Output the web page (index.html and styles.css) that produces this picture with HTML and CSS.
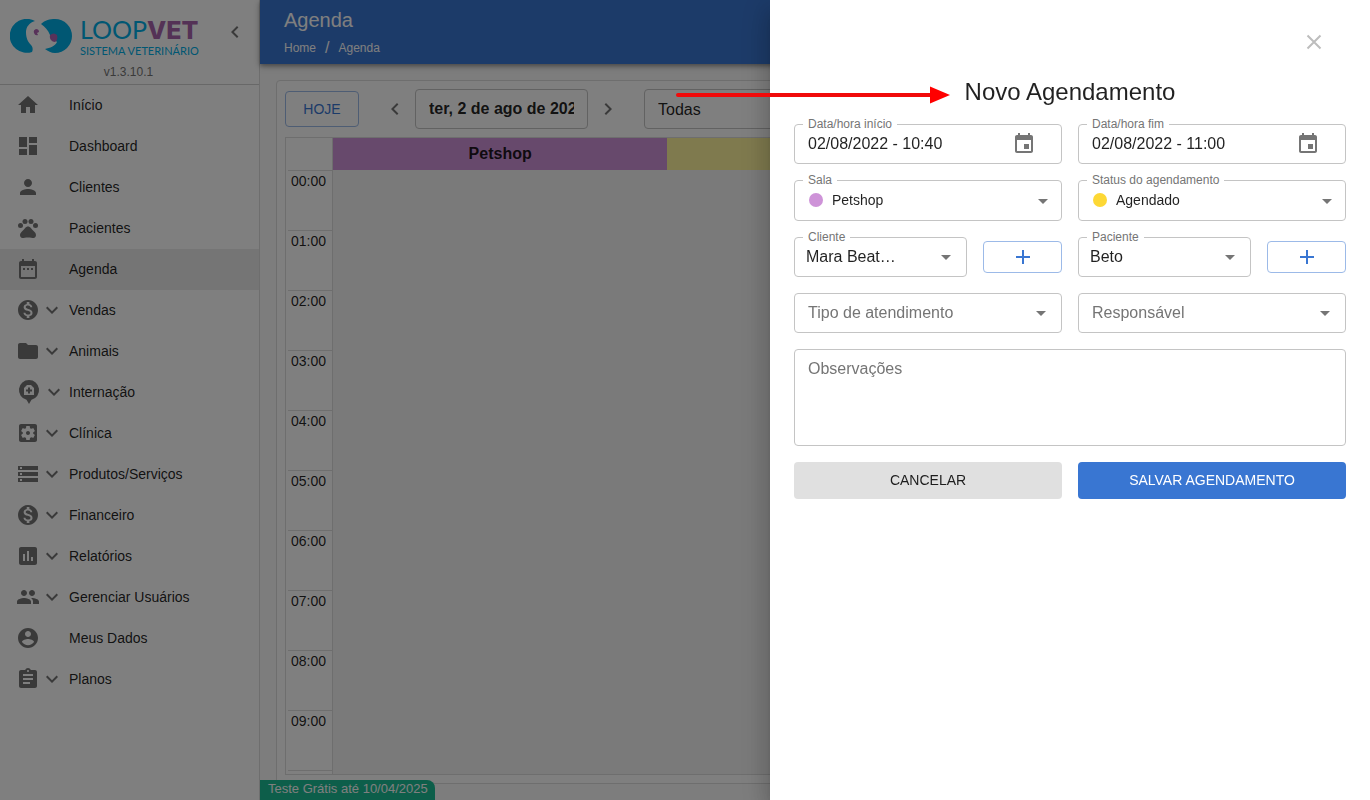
FILE: index.html
```html
<!DOCTYPE html>
<html lang="pt-BR">
<head>
<meta charset="utf-8">
<title>Agenda - LoopVet</title>
<link rel="stylesheet" href="styles.css">
</head>
<body>
<svg class="sprite" aria-hidden="true">
  <symbol id="down" viewBox="0 0 24 24"><path d="M7.41 8.59 12 13.17l4.59-4.58L18 10l-6 6-6-6z"/></symbol>
  <symbol id="left" viewBox="0 0 24 24"><path d="M15.41 7.41 14 6l-6 6 6 6 1.41-1.41L10.83 12z"/></symbol>
  <symbol id="right" viewBox="0 0 24 24"><path d="M10 6 8.59 7.41 13.17 12l-4.58 4.59L10 18l6-6z"/></symbol>
  <symbol id="caret" viewBox="0 0 24 24"><path d="m7 10 5 5 5-5z"/></symbol>
  <symbol id="plus" viewBox="0 0 24 24"><path d="M19 13h-6v6h-2v-6H5v-2h6V5h2v6h6z"/></symbol>
  <symbol id="event" viewBox="0 0 24 24"><path d="M17 12h-5v5h5v-5zM16 1v2H8V1H6v2H5c-1.11 0-1.99.9-1.99 2L3 19c0 1.1.89 2 2 2h14c1.1 0 2-.9 2-2V5c0-1.1-.9-2-2-2h-1V1h-2zm3 18H5V8h14v11z"/></symbol>
  <symbol id="money" viewBox="0 0 24 24"><path d="M12 2C6.48 2 2 6.48 2 12s4.48 10 10 10 10-4.48 10-10S17.52 2 12 2zm1.41 16.09V20h-2.67v-1.93c-1.71-.36-3.16-1.46-3.27-3.4h1.96c.1 1.05.82 1.87 2.65 1.87 1.96 0 2.4-.98 2.4-1.59 0-.83-.44-1.61-2.67-2.14-2.48-.6-4.18-1.62-4.18-3.67 0-1.72 1.39-2.84 3.11-3.21V4h2.67v1.95c1.86.45 2.79 1.86 2.85 3.39H14.3c-.05-1.11-.64-1.87-2.22-1.87-1.5 0-2.4.68-2.4 1.64 0 .84.65 1.39 2.67 1.91s4.18 1.39 4.18 3.91c-.01 1.83-1.38 2.83-3.12 3.16z"/></symbol>
</svg>

<div class="app">
  <aside class="sidebar">
    <header class="brand">
      <svg class="brand-mark" viewBox="0 0 62 34" aria-hidden="true">
        <path fill="#00aee6" d="M25 2C19 4 16 8 16 13C16 19 18 23 21 26C23 28 23 31 22 33A17 17 0 1 1 25 2Z"/>
        <path fill="#00aee6" d="M31 5C35 1 40 0 45 0A17 17 0 0 1 45 34C41 34 38 32 35 30C40 29 45 27 47 23L40 16C38 11 35 8 31 5Z"/>
        <path fill="#b064b4" d="M26 10a3 3 0 1 0 2 6l-1-2 2-1q0-3-3-3zM40 16q4-3 7 0c1 3 0 6-2 7c-3 0-6-3-5-7z"/>
      </svg>
      <div class="brand-text">
        <span class="brand-name">LOOP<b>VET</b></span>
        <span class="brand-sub">SISTEMA VETERINÁRIO</span>
      </div>
      <button class="icon-btn collapse" aria-label="Recolher menu"><svg class="icon"><use href="#left"/></svg></button>
      <span class="version">v1.3.10.1</span>
    </header>
    <nav class="menu">
      <a href="#"><svg class="icon" viewBox="0 0 24 24"><path d="M10 20v-6h4v6h5v-8h3L12 3 2 12h3v8z"/></svg><span>Início</span></a>
      <a href="#"><svg class="icon" viewBox="0 0 24 24"><path d="M3 13h8V3H3v10zm0 8h8v-6H3v6zm10 0h8V11h-8v10zm0-18v6h8V3h-8z"/></svg><span>Dashboard</span></a>
      <a href="#"><svg class="icon" viewBox="0 0 24 24"><path d="M12 12c2.21 0 4-1.79 4-4s-1.79-4-4-4-4 1.79-4 4 1.79 4 4 4zm0 2c-2.67 0-8 1.34-8 4v2h16v-2c0-2.66-5.33-4-8-4z"/></svg><span>Clientes</span></a>
      <a href="#"><svg class="icon" viewBox="0 0 24 24"><circle cx="4.5" cy="9.5" r="2.5"/><circle cx="9" cy="5.5" r="2.5"/><circle cx="15" cy="5.5" r="2.5"/><circle cx="19.5" cy="9.5" r="2.5"/><path d="M17.34 14.86c-.87-1.02-1.6-1.89-2.48-2.91-.46-.54-1.05-1.08-1.75-1.32-.11-.04-.22-.07-.33-.09-.25-.04-.52-.04-.78-.04s-.53 0-.79.05c-.11.02-.22.05-.33.09-.7.24-1.28.78-1.75 1.32-.87 1.02-1.6 1.89-2.48 2.91-1.31 1.31-2.92 2.76-2.62 4.79.29 1.02 1.02 2.03 2.33 2.32.73.15 3.06-.44 5.54-.44h.18c2.48 0 4.81.58 5.54.44 1.31-.29 2.04-1.31 2.33-2.32.31-2.04-1.3-3.49-2.61-4.8z"/></svg><span>Pacientes</span></a>
      <a href="#" class="active" aria-current="page"><svg class="icon" viewBox="0 0 24 24"><path d="M9 11H7v2h2v-2zm4 0h-2v2h2v-2zm4 0h-2v2h2v-2zm2-7h-1V2h-2v2H8V2H6v2H5c-1.11 0-1.99.9-1.99 2L3 20c0 1.1.89 2 2 2h14c1.1 0 2-.9 2-2V6c0-1.1-.9-2-2-2zm0 16H5V9h14v11z"/></svg><span>Agenda</span></a>
      <a href="#"><svg class="icon"><use href="#money"/></svg><svg class="icon"><use href="#down"/></svg><span>Vendas</span></a>
      <a href="#"><svg class="icon" viewBox="0 0 24 24"><path d="M10 4H4c-1.1 0-1.99.9-1.99 2L2 18c0 1.1.9 2 2 2h16c1.1 0 2-.9 2-2V8c0-1.1-.9-2-2-2h-8l-2-2z"/></svg><svg class="icon"><use href="#down"/></svg><span>Animais</span></a>
      <a href="#"><svg class="icon wide" viewBox="0 0 26 26"><path fill-rule="evenodd" d="M13 1a10 10 0 0 0-2.500 19.700L13 25l2.500-4.300A10 10 0 0 0 13 1zM8 9l3-3h4l3 3v7H8zM12 8.500v2h-2v2h2v2h2v-2h2v-2h-2v-2z"/></svg><svg class="icon"><use href="#down"/></svg><span>Internação</span></a>
      <a href="#"><svg class="icon" viewBox="0 0 24 24"><path d="M12 10c-1.1 0-2 .9-2 2s.9 2 2 2 2-.9 2-2-.9-2-2-2zm7-7H5c-1.11 0-2 .9-2 2v14c0 1.1.89 2 2 2h14c1.11 0 2-.9 2-2V5c0-1.1-.89-2-2-2zm-1.750 9c0 .23-.02.46-.05.68l1.48 1.16c.13.11.17.3.08.45l-1.4 2.420c-.09.15-.27.21-.43.15l-1.740-.7c-.36.28-.76.51-1.18.69l-.26 1.850c-.03.17-.18.3-.35.3h-2.800c-.17 0-.32-.13-.35-.29l-.26-1.850c-.43-.18-.82-.41-1.180-.69l-1.740.7c-.16.06-.34 0-.43-.15l-1.400-2.420c-.09-.15-.05-.34.08-.45l1.480-1.160c-.03-.23-.05-.46-.05-.69s.02-.46.05-.68l-1.480-1.160c-.13-.11-.17-.3-.08-.45l1.400-2.420c.09-.15.27-.21.43-.15l1.740.7c.36-.28.76-.51 1.180-.69l.26-1.850c.03-.17.18-.3.35-.3h2.800c.17 0 .32.13.35.29l.26 1.850c.43.18.82.41 1.180.69l1.740-.7c.16-.06.34 0 .43.15l1.400 2.420c.09.15.05.34-.08.45l-1.480 1.160c.03.23.05.46.05.69z"/></svg><svg class="icon"><use href="#down"/></svg><span>Clínica</span></a>
      <a href="#"><svg class="icon" viewBox="0 0 24 24"><path d="M2 20h20v-4H2v4zm2-3h2v2H4v-2zM2 4v4h20V4H2zm4 3H4V5h2v2zm-4 7h20v-4H2v4zm2-3h2v2H4v-2z"/></svg><svg class="icon"><use href="#down"/></svg><span>Produtos/Serviços</span></a>
      <a href="#"><svg class="icon"><use href="#money"/></svg><svg class="icon"><use href="#down"/></svg><span>Financeiro</span></a>
      <a href="#"><svg class="icon" viewBox="0 0 24 24"><path d="M19 3H5c-1.1 0-2 .9-2 2v14c0 1.1.9 2 2 2h14c1.1 0 2-.9 2-2V5c0-1.1-.9-2-2-2zM9 17H7v-7h2v7zm4 0h-2V7h2v10zm4 0h-2v-4h2v4z"/></svg><svg class="icon"><use href="#down"/></svg><span>Relatórios</span></a>
      <a href="#"><svg class="icon" viewBox="0 0 24 24"><path d="M16 11c1.66 0 2.99-1.34 2.99-3S17.66 5 16 5s-3 1.34-3 3 1.34 3 3 3zm-8 0c1.66 0 2.99-1.34 2.99-3S9.66 5 8 5 5 6.34 5 8s1.34 3 3 3zm0 2c-2.33 0-7 1.17-7 3.5V19h14v-2.5c0-2.33-4.67-3.5-7-3.5zm8 0c-.29 0-.62.02-.97.05 1.16.84 1.97 1.97 1.97 3.45V19h6v-2.5c0-2.33-4.67-3.5-7-3.5z"/></svg><svg class="icon"><use href="#down"/></svg><span>Gerenciar Usuários</span></a>
      <a href="#"><svg class="icon" viewBox="0 0 24 24"><path d="M12 2C6.48 2 2 6.48 2 12s4.48 10 10 10 10-4.48 10-10S17.52 2 12 2zm0 3c1.66 0 3 1.34 3 3s-1.34 3-3 3-3-1.34-3-3 1.34-3 3-3zm0 14.2c-2.5 0-4.71-1.28-6-3.22.03-1.99 4-3.08 6-3.08 1.99 0 5.97 1.09 6 3.08-1.29 1.94-3.5 3.22-6 3.22z"/></svg><span>Meus Dados</span></a>
      <a href="#"><svg class="icon" viewBox="0 0 24 24"><path d="M19 3h-4.18C14.4 1.84 13.3 1 12 1s-2.4.84-2.82 2H5c-1.1 0-2 .9-2 2v14c0 1.1.9 2 2 2h14c1.1 0 2-.9 2-2V5c0-1.1-.9-2-2-2zm-7 0c.55 0 1 .45 1 1s-.45 1-1 1-1-.45-1-1 .45-1 1-1zm2 14H7v-2h7v2zm3-4H7v-2h10v2zm0-4H7V7h10v2z"/></svg><svg class="icon"><use href="#down"/></svg><span>Planos</span></a>
    </nav>
  </aside>

  <div class="page">
    <header class="topbar">
      <h1>Agenda</h1>
      <nav class="crumbs"><a href="#">Home</a><i>/</i><a href="#">Agenda</a></nav>
    </header>
    <main class="content">
      <section class="card">
        <div class="toolbar">
          <button class="today">HOJE</button>
          <div class="date-nav">
            <button class="icon-btn" aria-label="Dia anterior"><svg class="icon"><use href="#left"/></svg></button>
            <input class="date" aria-label="Data" value="ter, 2 de ago de 2022" readonly>
            <button class="icon-btn" aria-label="Próximo dia"><svg class="icon"><use href="#right"/></svg></button>
          </div>
          <select class="rooms" aria-label="Salas"><option>Todas</option></select>
        </div>
        <div class="calendar">
          <table>
            <thead><tr><th class="hour-col"></th><th class="petshop">Petshop</th><th class="yellow"></th><th></th></tr></thead>
            <tbody>
              <tr><td><time>00:00</time></td><td></td><td></td><td></td></tr>
              <tr><td><time>01:00</time></td><td></td><td></td><td></td></tr>
              <tr><td><time>02:00</time></td><td></td><td></td><td></td></tr>
              <tr><td><time>03:00</time></td><td></td><td></td><td></td></tr>
              <tr><td><time>04:00</time></td><td></td><td></td><td></td></tr>
              <tr><td><time>05:00</time></td><td></td><td></td><td></td></tr>
              <tr><td><time>06:00</time></td><td></td><td></td><td></td></tr>
              <tr><td><time>07:00</time></td><td></td><td></td><td></td></tr>
              <tr><td><time>08:00</time></td><td></td><td></td><td></td></tr>
              <tr><td><time>09:00</time></td><td></td><td></td><td></td></tr>
              <tr><td><time></time></td><td></td><td></td><td></td></tr>
            </tbody>
          </table>
        </div>
      </section>
    </main>
    <div class="trial">Teste Grátis até 10/04/2025</div>
  </div>
</div>

<div class="backdrop"></div>

<aside class="drawer" role="dialog" aria-labelledby="drawer-title">
  <div class="drawer-top">
    <button class="icon-btn close" aria-label="Fechar"><svg class="icon" viewBox="0 0 24 24"><path d="M5.500 5.500l13 13M18.500 5.500l-13 13" fill="none" stroke="currentColor" stroke-width="2"/></svg></button>
  </div>
  <h2 id="drawer-title">Novo Agendamento</h2>
  <form class="form">
    <div class="field">
      <label for="start">Data/hora início</label>
      <input id="start" value="02/08/2022 - 10:40">
      <button type="button" class="icon-btn pick" aria-label="Escolher data de início"><svg class="icon"><use href="#event"/></svg></button>
    </div>
    <div class="field">
      <label for="end">Data/hora fim</label>
      <input id="end" value="02/08/2022 - 11:00">
      <button type="button" class="icon-btn pick" aria-label="Escolher data de fim"><svg class="icon"><use href="#event"/></svg></button>
    </div>
    <div class="field status">
      <label for="room">Sala</label>
      <span class="dot violet"></span>
      <select id="room"><option>Petshop</option></select>
      <svg class="icon caret"><use href="#caret"/></svg>
    </div>
    <div class="field status">
      <label for="state">Status do agendamento</label>
      <span class="dot amber"></span>
      <select id="state"><option>Agendado</option></select>
      <svg class="icon caret"><use href="#caret"/></svg>
    </div>
    <div class="pair">
      <div class="field compact">
        <label for="client">Cliente</label>
        <select id="client"><option>Mara Beat…</option></select>
        <svg class="icon caret"><use href="#caret"/></svg>
      </div>
      <button type="button" class="add" aria-label="Adicionar cliente"><svg class="icon"><use href="#plus"/></svg></button>
    </div>
    <div class="pair">
      <div class="field compact">
        <label for="patient">Paciente</label>
        <select id="patient"><option>Beto</option></select>
        <svg class="icon caret"><use href="#caret"/></svg>
      </div>
      <button type="button" class="add" aria-label="Adicionar paciente"><svg class="icon"><use href="#plus"/></svg></button>
    </div>
    <div class="field empty">
      <select aria-label="Tipo de atendimento"><option>Tipo de atendimento</option></select>
      <svg class="icon caret"><use href="#caret"/></svg>
    </div>
    <div class="field empty">
      <select aria-label="Responsável"><option>Responsável</option></select>
      <svg class="icon caret"><use href="#caret"/></svg>
    </div>
    <textarea class="notes" rows="4" aria-label="Observações" placeholder="Observações"></textarea>
    <button type="button" class="action cancel">CANCELAR</button>
    <button type="submit" class="action save">SALVAR AGENDAMENTO</button>
  </form>
</aside>

<svg class="pointer" viewBox="0 0 274 18" aria-hidden="true"><path d="M2 9H256" stroke="#f10a0a" stroke-width="4" stroke-linecap="round"/><path d="M254 0.500L274 9L254 17.500z" fill="#f00"/></svg>
</body>
</html>
```
FILE: styles.css
```css
* { box-sizing: border-box; }
body {
  margin: 0;
  font-family: "Liberation Sans", Arial, sans-serif;
  font-size: 14px;
  color: rgba(0, 0, 0, 0.87);
  background: #fff;
  overflow: hidden;
}
a { color: inherit; text-decoration: none; }
button, input, select, textarea { font: inherit; color: inherit; }
.sprite { display: none; }
.icon { width: 24px; height: 24px; flex: none; display: block; fill: currentColor; }
.icon-btn { border: 0; padding: 0; background: none; color: #757575; display: flex; }

.app { display: flex; height: 100vh; }

/* Sidebar */
.sidebar { width: 260px; flex: none; border-right: 1px solid #dcdcdc; overflow: hidden; }
.brand {
  display: grid;
  grid-template-columns: 62px 1fr 24px;
  column-gap: 8px;
  padding: 16px 12px 3px 10px;
  border-bottom: 1px solid #d0d0d0;
}
.brand-mark { width: 62px; height: 34px; margin-top: 3px; }
.brand-text { display: flex; flex-direction: column; height: 48px; font-family: Lato, sans-serif; color: #00aee6; white-space: nowrap; }
.brand-name { font-size: 25px; line-height: 26px; }
.brand-name b { font-family: Inter, sans-serif; font-weight: 800; line-height: 1; color: #a864ac; }
.brand-sub { font-size: 11px; line-height: 16px; }
.collapse { margin-top: 4px; height: 24px; }
.version { grid-column: 1 / -1; text-align: center; font-size: 12px; line-height: 17px; color: #757575; }
.menu a { display: grid; grid-template-columns: auto 1fr; align-items: center; height: 41px; padding-left: 16px; }
.menu a { display: flex; }
.menu .icon { color: #757575; }
.menu .wide { width: 26px; height: 26px; }
.menu span { position: absolute; left: 69px; line-height: 16px; padding-bottom: 2px; }
.menu .icon { margin-bottom: 1px; }
.menu a.active { background: #ebebeb; }

/* Page */
.page { flex: 1; min-width: 0; display: flex; flex-direction: column; background: #fafafa; }
.topbar {
  height: 64px;
  padding: 8px 24px;
  color: #fff;
  background: #3976d2;
  box-shadow: 0 2px 4px rgba(0, 0, 0, 0.3), 0 2px 8px rgba(0, 0, 0, 0.2);
}
.topbar h1 { margin: 0; font-size: 20px; line-height: 24px; font-weight: 400; }
.crumbs { display: flex; align-items: center; gap: 9px; font-size: 12px; line-height: 32px; }
.crumbs i { font-size: 16px; font-style: normal; }
.content { flex: 1; min-height: 0; padding: 16px; display: flex; }
.card {
  flex: 1;
  min-width: 0;
  display: flex;
  flex-direction: column;
  gap: 8px;
  padding: 8px;
  background: #fff;
  border: 1px solid #dcdcdc;
  border-radius: 4px;
}
.toolbar { display: flex; align-items: center; gap: 24px; }
.today { width: 74px; height: 36px; border: 1px solid #9cbae8; border-radius: 4px; background: none; color: #3976d2; }
.date-nav { display: flex; align-items: center; gap: 8px; }
.date, .rooms { height: 40px; padding: 0 13px; border: 1px solid #c4c4c4; border-radius: 4px; background: none; font-size: 16px; }
.date { width: 173px; font-weight: 700; }
.rooms { flex: 1; appearance: none; }
.calendar { flex: 1; min-height: 0; overflow: hidden; border: 1px solid #dcdcdc; }
.calendar table { width: calc(100% - 8px); table-layout: fixed; border-collapse: separate; border-spacing: 0; }
.calendar th { height: 32px; padding: 0; font-size: 16px; }
.calendar .hour-col { width: 47px; border-right: 1px solid #dcdcdc; }
.petshop { background: #ce93d8; }
.yellow { background: #fff59d; }
.calendar td { height: 60px; padding: 0; vertical-align: top; background: #f5f5f5; }
.calendar td:first-child { padding-left: 2px; background: #fff; border-right: 1px solid #dcdcdc; }
.calendar time { display: block; padding-left: 3px; border-top: 1px solid #dcdcdc; line-height: 20px; }
.trial {
  position: absolute;
  left: 260px;
  bottom: 0;
  padding: 0 7px 2px 8px;
  font-size: 13px;
  line-height: 18px;
  color: #fff;
  background: #1abc94;
  border-top-right-radius: 8px;
}

.backdrop { position: fixed; inset: 0; background: rgba(0, 0, 0, 0.5); }

/* Drawer */
.drawer {
  position: fixed;
  top: 0;
  right: 0;
  bottom: 0;
  width: min(600px, 100%);
  padding: 24px;
  background: #fff;
  box-shadow: 0 8px 10px -5px rgba(0, 0, 0, 0.2), 0 16px 24px 2px rgba(0, 0, 0, 0.14), 0 6px 30px 5px rgba(0, 0, 0, 0.12);
}
.drawer-top { display: flex; justify-content: flex-end; padding: 6px 20px; }
.close { color: #bdbdbd; }
.drawer h2 { margin: 16px 0; font-size: 24px; line-height: 32px; font-weight: 400; text-align: center; }
.form { display: grid; grid-template-columns: 1fr 1fr; gap: 16px; }
.field {
  position: relative;
  display: flex;
  align-items: center;
  min-width: 0;
  height: 40px;
  padding-left: 13px;
  border: 1px solid #c4c4c4;
  border-radius: 4px;
  font-size: 16px;
}
.field label {
  position: absolute;
  top: -9px;
  left: 8px;
  padding: 0 5px;
  font-size: 12px;
  line-height: 16px;
  color: #757575;
  background: #fff;
}
.field input, .field select { flex: 1; min-width: 0; padding: 0; border: 0; outline: 0; background: none; appearance: none; }
.field select { height: 38px; padding-bottom: 2px; }
.field.status { height: 41px; gap: 9px; padding-left: 14px; font-size: 14px; }
.field.compact { flex: 1; padding-left: 11px; }
.field.empty { color: #757575; }
.pick { margin-right: 25px; }
.caret { position: absolute; right: 8px; color: #757575; pointer-events: none; }
.status .caret { right: 6px; }
.dot { width: 14px; height: 14px; margin-bottom: 1px; border-radius: 50%; }
.violet { background: #ce93d8; }
.amber { background: #fdd835; }
.pair { display: flex; align-items: center; gap: 16px; }
.add { display: flex; align-items: center; justify-content: center; width: 79px; height: 32px; padding: 0; border: 1px solid #9cbae8; border-radius: 4px; background: none; color: #3976d2; }
.notes { grid-column: 1 / -1; height: 97px; padding: 8px 13px; border: 1px solid #c4c4c4; border-radius: 4px; font-size: 16px; line-height: 22px; resize: none; }
.notes::placeholder { color: #757575; }
.action { height: 37px; padding: 0 0 2px; border: 0; border-radius: 4px; }
.cancel { background: #e0e0e0; }
.save { background: #3976d2; color: #fff; }

.pointer { position: fixed; top: 86px; right: 420px; width: 274px; height: 18px; }
```
